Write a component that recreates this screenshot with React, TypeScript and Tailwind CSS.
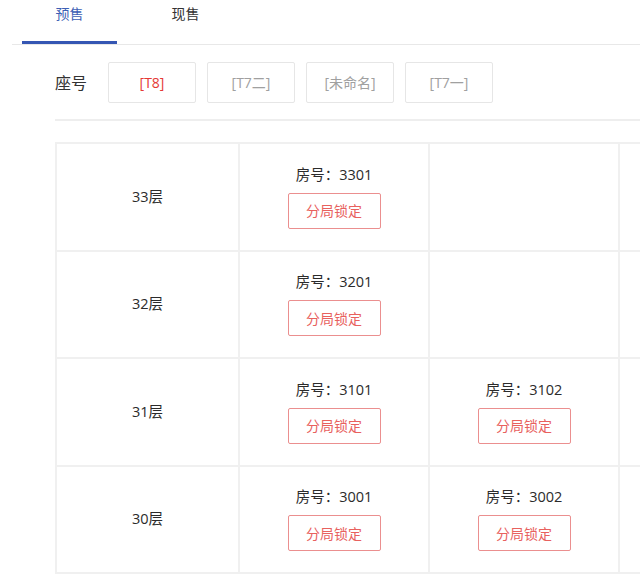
import React from "react";

const SEATS = [
  { id: "t8", name: "[T8]", active: true },
  { id: "t7-2", name: "[T7二]", active: false },
  { id: "none", name: "[未命名]", active: false },
  { id: "t7-1", name: "[T7一]", active: false },
];

const FLOORS = [
  { floor: "33层", rooms: ["3301", null, null] },
  { floor: "32层", rooms: ["3201", null, null] },
  { floor: "31层", rooms: ["3101", "3102", null] },
  { floor: "30层", rooms: ["3001", "3002", null] },
];

function RoomCell({ room }: { room: string | null }) {
  return (
    <div className="w-[190px] shrink-0 border-l-2 border-[#f0f0f0] flex flex-col items-center justify-center">
      {room && (
        <>
          <div className="text-[14.5px] leading-[20px] text-[#2b2b2b]">房号：{room}</div>
          <button className="mt-[8px] w-[93px] h-[36px] rounded-[2px] border border-[#eb8f8f] text-[14px] text-[#e8615e] bg-white">
            分局锁定
          </button>
        </>
      )}
    </div>
  );
}

export default function App() {
  return (
    <div
      className="w-[640px] h-[574px] overflow-hidden bg-white"
      style={{ fontFamily: '"Open Sans", "Noto Sans CJK SC", sans-serif' }}
    >
      {/* tabs */}
      <div className="ml-[12px] flex border-b border-[#e8e8e8] h-[45px]">
        <div className="ml-[10px] w-[95px] flex flex-col">
          <div className="flex-1 flex items-start justify-center pt-[3px] text-[14px] text-[#3d5fb5]">预售</div>
          <div className="h-[3px] bg-[#3556b3]" />
        </div>
        <div className="ml-[21px] w-[95px] flex justify-center pt-[3px] text-[14px] text-[#333]">现售</div>
      </div>

      {/* seat selector */}
      <div className="ml-[55px] mt-[17px] flex items-center h-[41px]">
        <div className="w-[53px] text-[16px] text-[#333]">座号</div>
        <div className="flex gap-[11px]">
          {SEATS.map((s) => (
            <button
              key={s.id}
              className={`w-[88px] h-[41px] border border-[#e6e6e6] rounded-[2px] text-[14px] bg-white ${
                s.active ? "text-[#e53935]" : "text-[#a0a0a0]"
              }`}
            >
              {s.name}
            </button>
          ))}
        </div>
      </div>
      <div className="ml-[55px] mt-[16px] border-t-2 border-[#eeeeee]" />

      {/* floor table */}
      <div className="ml-[55px] mt-[21px] w-[800px] border-t-2 border-l-2 border-[#f0f0f0]">
        {FLOORS.map((f) => (
          <div key={f.floor} className="flex h-[107.5px] border-b-2 border-[#f0f0f0]">
            <div className="w-[181px] shrink-0 flex items-center justify-center text-[14.5px] text-[#2b2b2b]">
              {f.floor}
            </div>
            {f.rooms.map((r, i) => (
              <RoomCell key={i} room={r} />
            ))}
          </div>
        ))}
      </div>
    </div>
  );
}
